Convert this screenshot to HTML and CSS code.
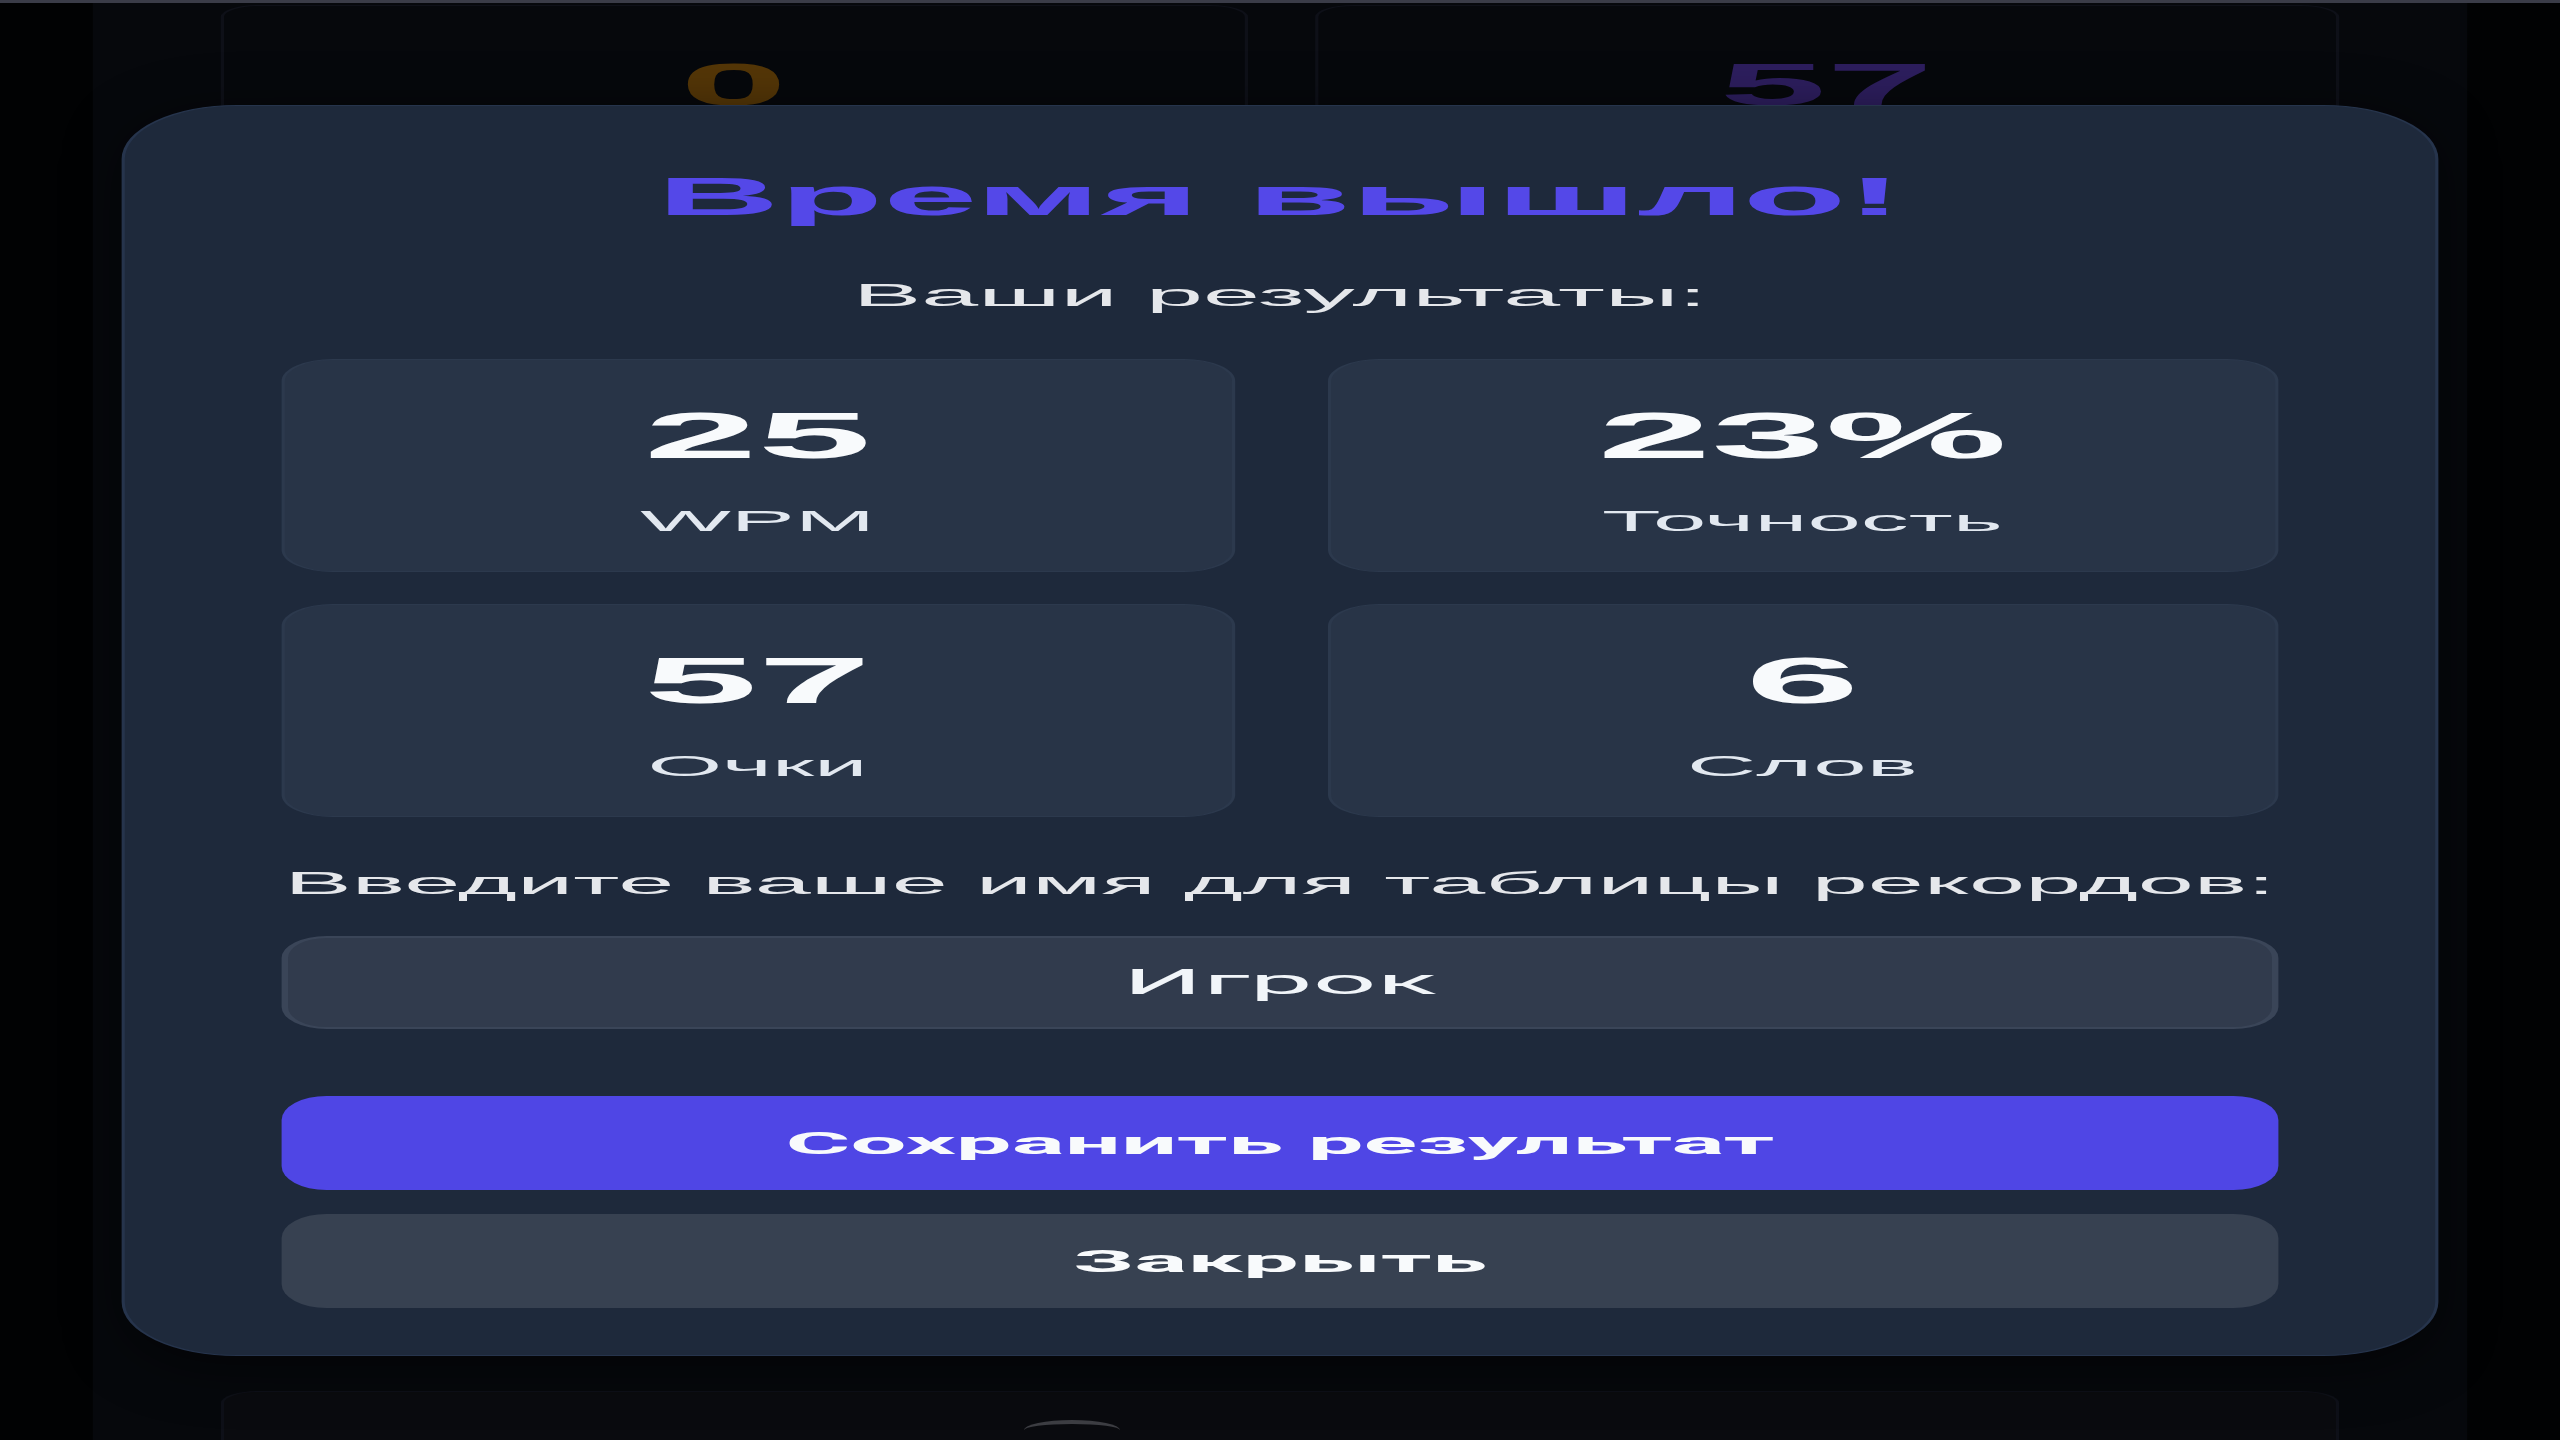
FILE: index.html
```html
<!DOCTYPE html>
<html lang="ru">
<head>
<meta charset="utf-8">
<title>Время вышло!</title>
<link rel="stylesheet" href="styles.css">
</head>
<body>
<div class="topbar"></div>
<div class="stage">
  <main class="column">
    <section class="tiles">
      <div class="tile"><span class="tile-num amber">0</span></div>
      <div class="tile"><span class="tile-num violet">57</span></div>
    </section>
    <section class="board"></section>
    <section class="footer-card"><span class="footer-glyph"></span></section>
  </main>

  <div class="overlay">
    <div class="modal">
      <h1 class="modal-title">Время вышло!</h1>
      <p class="modal-sub">Ваши результаты:</p>
      <div class="stats">
        <div class="stat"><div class="stat-value">25</div><div class="stat-label">WPM</div></div>
        <div class="stat"><div class="stat-value">23%</div><div class="stat-label">Точность</div></div>
        <div class="stat"><div class="stat-value">57</div><div class="stat-label">Очки</div></div>
        <div class="stat"><div class="stat-value">6</div><div class="stat-label">Слов</div></div>
      </div>
      <p class="prompt">Введите ваше имя для таблицы рекордов:</p>
      <input class="name-input" type="text" value="Игрок">
      <button class="btn btn-primary">Сохранить результат</button>
      <button class="btn btn-secondary">Закрыть</button>
    </div>
  </div>
</div>
</body>
</html>
```

FILE: styles.css
```css
* { box-sizing: border-box; }

html, body {
  margin: 0;
  padding: 0;
  background: #030407;
  overflow: hidden;
  font-family: "Liberation Sans", Arial, sans-serif;
}

.topbar {
  position: relative;
  z-index: 5;
  height: 3px;
  background: #3a3c48;
}

.stage {
  position: relative;
  width: 800px;
  height: 1437px;
  transform: scaleX(3.2);
  transform-origin: 0 0;
}

.column {
  margin: 0 29px;
  height: 100%;
  background: #0c1018;
  padding: 2px 40px 0;
  display: flex;
  flex-direction: column;
}

.tiles {
  display: grid;
  grid-template-columns: 1fr 1fr;
  gap: 21px;
}

.tile {
  height: 300px;
  border: 1px solid #1c2030;
  border-radius: 12px;
  background: #0c1018;
  display: flex;
  justify-content: center;
  padding-top: 44px;
}

.tile-num {
  font-size: 60px;
  font-weight: 700;
  line-height: 70px;
}
.amber { color: #a86d0e; }
.violet { color: #5a3cbc; }

.board {
  margin-top: 30px;
  height: 980px;
  border-radius: 12px;
  background: #0c1018;
}

.footer-card {
  margin-top: 83px;
  flex: 1;
  border: 1px solid #1c2030;
  border-bottom: none;
  border-radius: 12px 12px 0 0;
  background: #14161e;
  display: flex;
  justify-content: center;
  padding-top: 28px;
}

.footer-glyph {
  width: 30px;
  height: 20px;
  margin-left: -130px;
  border-radius: 50% 50% 0 0;
  border-top: 4px solid #7a7c86;
}

.overlay {
  position: absolute;
  inset: 0;
  background: rgba(0, 0, 0, 0.5);
  display: flex;
  justify-content: center;
  align-items: flex-start;
  padding-top: 102px;
}

.modal {
  width: 724px;
  background: #1e293b;
  border: 1px solid #26344c;
  border-radius: 36px / 54px;
  padding: 61px 49px 47px;
  display: flex;
  flex-direction: column;
  box-shadow: 0 10px 30px rgba(0, 0, 0, 0.5);
}

.modal-title {
  margin: 0;
  text-align: center;
  font-size: 53px;
  line-height: 60px;
  font-weight: 700;
  color: #5448e8;
}

.modal-sub {
  margin: 48px 0 0;
  text-align: center;
  font-size: 32px;
  line-height: 40px;
  color: #e5e7eb;
}

.stats {
  margin-top: 44px;
  display: grid;
  grid-template-columns: 1fr 1fr;
  column-gap: 29px;
  row-gap: 32px;
}

.stat {
  height: 213px;
  background: #283447;
  border: 1px solid #2c394d;
  border-radius: 16px / 22px;
  padding-top: 44px;
  text-align: center;
}

.stat-value {
  font-size: 64px;
  line-height: 64px;
  font-weight: 700;
  color: #f8fafc;
}

.stat-label {
  margin-top: 35px;
  font-size: 30px;
  line-height: 36px;
  color: #e2e8f0;
}

.prompt {
  margin: 48px 0 0;
  text-align: center;
  white-space: nowrap;
  font-size: 31.5px;
  line-height: 36px;
  color: #e5e7eb;
}

.name-input {
  margin-top: 35px;
  height: 93px;
  width: 100%;
  background: #313b4d;
  border: 2px solid #3a4558;
  border-radius: 14px / 22px;
  color: #f1f5f9;
  font-family: Roboto, "Liberation Sans", Arial, sans-serif;
  font-size: 35px;
  text-align: center;
  outline: none;
}

.btn {
  height: 94px;
  width: 100%;
  border: none;
  border-radius: 14px / 24px;
  font-family: Roboto, "Liberation Sans", Arial, sans-serif;
  font-size: 31px;
  font-weight: 700;
  color: #f8fafc;
}

.btn-primary {
  margin-top: 67px;
  background: #4f46e5;
}

.btn-secondary {
  margin-top: 24px;
  background: #374151;
}
```
